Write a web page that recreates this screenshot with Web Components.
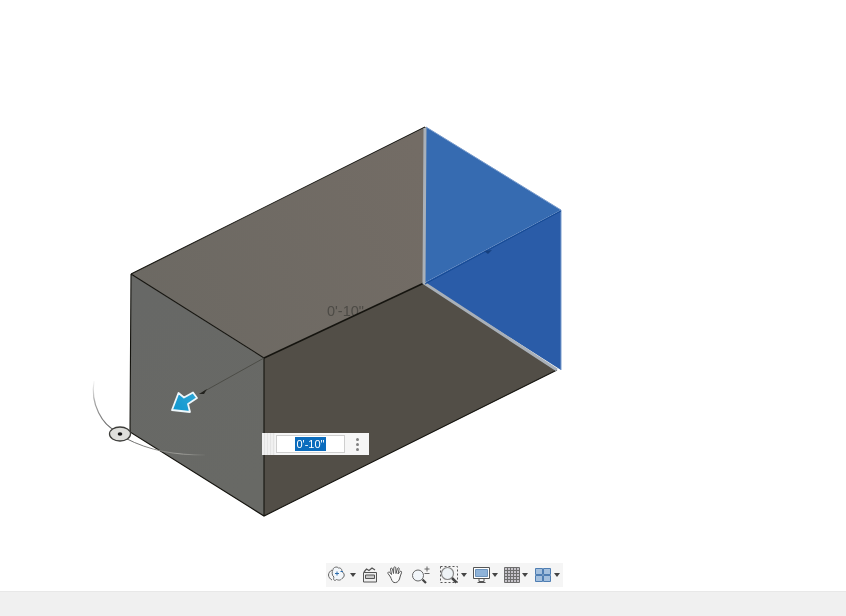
<!DOCTYPE html>
<html>
<head>
<meta charset="utf-8">
<style>
  html, body { margin: 0; height: 100%; background: #fff; }
  body { font-family: "Liberation Sans", Arial, sans-serif; overflow: hidden; }
</style>
</head>
<body>
<cad-app></cad-app>
<script>
class CadModel extends HTMLElement {
    constructor() {
        super()
        this.shadow = this.attachShadow({mode: 'open'})
    }
    connectedCallback() {
        this.shadow.innerHTML = `
        <style>
          :host { display: block; position: absolute; inset: 0; }
          svg { display: block; width: 100%; height: 100%; filter: blur(.35px); }
          text { font-family: "Liberation Sans", Arial, sans-serif; }
        </style>
        <svg viewBox="0 0 846 591" xmlns="http://www.w3.org/2000/svg">
          <defs>
            <linearGradient id="top" x1="131" y1="300" x2="425" y2="160" gradientUnits="userSpaceOnUse">
              <stop offset="0" stop-color="#6c6963"/><stop offset="1" stop-color="#736c65"/>
            </linearGradient>
            <linearGradient id="left" x1="131" y1="300" x2="264" y2="480" gradientUnits="userSpaceOnUse">
              <stop offset="0" stop-color="#676866"/><stop offset="1" stop-color="#686965"/>
            </linearGradient>
            <linearGradient id="arc" x1="93" y1="380" x2="125" y2="435" gradientUnits="userSpaceOnUse">
              <stop offset="0" stop-color="#fff"/><stop offset=".3" stop-color="#aaa"/><stop offset="1" stop-color="#444"/>
            </linearGradient>
            <linearGradient id="tail" x1="126" y1="440" x2="205" y2="455" gradientUnits="userSpaceOnUse">
              <stop offset="0" stop-color="#555"/><stop offset=".45" stop-color="#8a8a86"/><stop offset=".7" stop-color="#a5a5a0"/><stop offset="1" stop-color="#6e6f6b"/>
            </linearGradient>
            <linearGradient id="arrow" x1="172" y1="412" x2="196" y2="392" gradientUnits="userSpaceOnUse">
              <stop offset="0" stop-color="#0d95cf"/><stop offset="1" stop-color="#2fa7d6"/>
            </linearGradient>
          </defs>

          <!-- box faces -->
          <polygon points="131,274 426,127 424,283 264,358" fill="url(#top)"/>
          <text x="327" y="315.500" font-size="14.500" fill="#4d4b46">0'-10"</text>
          <polygon points="131,274 264,358 264,516 130,432" fill="url(#left)"/>
          <polygon points="264,358 424,283 557,370 264,516" fill="#524e47"/>

          <!-- box edges -->
          <path d="M131 274L425 127M131 274L264 358M131 274L130 432L264 516L557 370M264 358V516" fill="none" stroke="#15140f" stroke-width="1.100"/>
          <path d="M264 358L424 283" fill="none" stroke="#15140f" stroke-width="1.500"/>

          <!-- sketch arc around the pivot -->
          <path d="M94 381C90 405 103 425 116 431" fill="none" stroke="url(#arc)" stroke-width="1.200"/>
          <path d="M125 438C150 451 175 455 205 455" fill="none" stroke="url(#tail)" stroke-width=".9"/>

          <!-- selected face -->
          <polygon points="426,127 561,210 424,283" fill="#366bb1"/>
          <polygon points="561,210 561,370 424,283" fill="#2a5ca8"/>
          <path d="M425 128L424 283L557 370" fill="none" stroke="#a9b0b8" stroke-width="3"/>
          <path d="M426 127L561 210V370" fill="none" stroke="#7b9dcd" stroke-width="1"/>
          <path d="M425 284L561 211" fill="none" stroke="#154a94" stroke-width="1"/>
          <path d="M484 251L492 250L488 254Z" fill="#16407f"/>

          <!-- dimension leader -->
          <path d="M264 358L203 392" fill="none" stroke="#45453f" stroke-width=".8"/>
          <path d="M207 389L199 394L204 394Z" fill="#22221e"/>

          <!-- blue drag arrow -->
          <path d="M172 410L178.500 393L184 397.500L193 392.500L197 398L188 404L190 412Z" fill="url(#arrow)" stroke="#eef7fb" stroke-width="1.800" stroke-linejoin="round"/>

          <!-- pivot -->
          <ellipse cx="120" cy="434" rx="10.500" ry="7" fill="#dededb" stroke="#3d3d3a" stroke-width="1.300"/>
          <ellipse cx="120" cy="434" rx="2.300" ry="1.800" fill="#111"/>
        </svg>
        `
    }
}

class DimInput extends HTMLElement {
    constructor() {
        super()
        this.shadow = this.attachShadow({mode: 'open'})
    }
    connectedCallback() {
        this.shadow.innerHTML = `
        <style>
          :host {
            position: absolute; left: 262px; top: 433px;
            width: 107px; height: 22px; box-sizing: border-box;
            display: flex; align-items: center;
            background: #f6f6f6;
          }
          .grip { width: 13px; height: 100%; background: repeating-linear-gradient(90deg, #f0f0f0 0 2px, #e4e4e4 2px 3px); }
          .field {
            width: 69px; height: 18px; margin-left: 1px; box-sizing: border-box;
            border: 1px solid #cfcfcf; background: #fff;
            display: flex; justify-content: center; align-items: center;
          }
          .sel { background: #0b6cbd; color: #fff; font-size: 11px; line-height: 14px; padding: 0 1px; filter: blur(.25px); }
          .more { flex: 1; display: flex; flex-direction: column; align-items: center; gap: 2px; }
          .more i { width: 3px; height: 3px; border-radius: 50%; background: #808080; }
        </style>
        <div class="grip"></div>
        <div class="field"><span class="sel"><slot></slot></span></div>
        <div class="more"><i></i><i></i><i></i></div>
        `
    }
}

class NavBar extends HTMLElement {
    constructor() {
        super()
        this.shadow = this.attachShadow({mode: 'open'})
    }
    connectedCallback() {
        const caret = `<svg class="caret" width="6" height="4" viewBox="0 0 6 4"><path d="M0 0H6L3 4Z" fill="#444"/></svg>`
        const caretTight = `<svg class="caret tight" width="6" height="4" viewBox="0 0 6 4"><path d="M0 0H6L3 4Z" fill="#444"/></svg>`
        this.shadow.innerHTML = `
        <style>
          :host {
            position: absolute; left: 326px; top: 563px;
            width: 237px; height: 24px; box-sizing: border-box;
            display: flex; align-items: center;
            padding-left: 1px;
            background: #f5f5f5;
          }
          svg { display: block; flex: none; filter: blur(.3px); }
          .caret { margin-left: 3px; }
          .caret.tight { margin-left: 2px; }
        </style>
        <!-- orbit -->
        <svg width="20" height="20" viewBox="0 0 20 20" fill="none" stroke="#666" stroke-width="1">
          <path d="M5 5C3 6 1.500 8 1.500 10S3 14 5 15"/>
          <path d="M6 4.500C6 2.500 10 1 11.500 3C14 2.500 15.500 5 14.500 6.500C18 8 18 12 15 13.500C13 16 11 15 9.500 14.500C7 17 6 14 7 12C5 11 4.500 7 6 4.500Z" fill="#f3f7fb"/>
          <path d="M8 8.500H12M10 6.500V10.500M13.500 6.500H16" stroke="#2f6fae"/>
        </svg>
        ${caret}
        <!-- rewind -->
        <svg style="margin-left:6px" width="16" height="16" viewBox="0 0 16 16" fill="none" stroke="#555" stroke-width="1">
          <path d="M1.500 5.500H14.500V15H1.500Z" fill="#efefef"/>
          <path d="M3.500 8H12.500V11.500H3.500Z" fill="#c9c9c9"/>
          <path d="M2 5L4.500 2L7 3.500L10 1L13 3" stroke-width="1.300"/>
        </svg>
        <!-- pan -->
        <svg style="margin-left:9px" width="16" height="18" viewBox="0 0 16 18" fill="#fbfbfb" stroke="#555" stroke-width="1" stroke-linejoin="round">
          <path d="M3.500 11L1 7.500C.5 6 2 5.500 3 6.500L4.500 8.500L3.500 3C3.500 1.800 5 1.800 5.500 3L6.500 7.500L6.800 1.800C7 .5 8.500 .5 8.800 1.800L9 7.500L10.500 2.500C11 1.300 12.500 1.800 12.200 3L11 8L13 5.500C14 4.800 15 5.500 14.500 6.800C13.500 9 13 11 12.500 13C11.500 16 9 17 7 16.500C5 16 4.500 13 3.500 11Z"/>
        </svg>
        <!-- zoom +/- -->
        <svg style="margin-left:9px" width="19" height="18" viewBox="0 0 19 18" fill="none" stroke="#666">
          <circle cx="6" cy="9.500" r="5.500" fill="#f2f6fa"/>
          <path d="M10.500 13.500L14 17" stroke="#444" stroke-width="2.200"/>
          <path d="M12.500 3H17.500M15 .5V5.500M12.500 7.500H17.500" stroke-width="1"/>
        </svg>
        <!-- zoom window -->
        <svg style="margin-left:9px" width="18" height="18" viewBox="0 0 18 18" fill="none">
          <path d="M.5 .5H17.500V16.500H.5Z" stroke="#555" stroke-dasharray="2 2"/>
          <circle cx="7.500" cy="7.500" r="6" fill="#eef3f6" stroke="#888" stroke-width="1.200"/>
          <path d="M12 12L16.500 16.500" stroke="#444" stroke-width="2.500"/>
        </svg>
        ${caret}
        <!-- monitor -->
        <svg style="margin-left:6px" width="17" height="17" viewBox="0 0 17 17" fill="none" stroke="#555">
          <path d="M.5 .5H16.500V11.500H.5Z" fill="#fff"/>
          <path d="M2.500 2.500H14.500V9.500H2.500Z" fill="#8fb3d9" stroke="#6d93bb"/>
          <path d="M6 12V14.500H11V12M4.500 15.500H12.500"/>
        </svg>
        ${caretTight}
        <!-- grid -->
        <svg style="margin-left:6px" width="16" height="16" viewBox="0 0 16 16" fill="#c6c3c9" stroke="#6e6e6e">
          <path d="M.5 .5H15.500V15.500H.5Z"/>
          <path d="M3.500 .5V15.500M6.500 .5V15.500M9.500 .5V15.500M12.500 .5V15.500M.5 3.500H15.500M.5 6.500H15.500M.5 9.500H15.500M.5 12.500H15.500" fill="none"/>
        </svg>
        ${caretTight}
        <!-- viewports -->
        <svg style="margin-left:7px" width="16" height="14" viewBox="0 0 16 14" fill="#a4c0de" stroke="#4f7eb3">
          <path d="M.5 .5H7.500V6.500H.5ZM8.500 .5H15.500V6.500H8.500ZM.5 7.500H7.500V13.500H.5ZM8.500 7.500H15.500V13.500H8.500Z"/>
        </svg>
        ${caret}
        `
    }
}

class CadApp extends HTMLElement {
    constructor() {
        super()
        this.shadow = this.attachShadow({mode: 'open'})
    }
    connectedCallback() {
        this.shadow.innerHTML = `
        <style>
          :host { display: flex; flex-direction: column; height: 100vh; }
          .view { flex: 1; position: relative; background: #fff; }
          .status { height: 25px; background: #f0f0f0; border-top: 1px solid #e8e8e8; box-sizing: border-box; }
        </style>
        <div class="view">
          <cad-model></cad-model>
          <dim-input>0'-10"</dim-input>
          <nav-bar></nav-bar>
        </div>
        <div class="status"></div>
        `
    }
}

customElements.define('cad-model', CadModel)
customElements.define('dim-input', DimInput)
customElements.define('nav-bar', NavBar)
customElements.define('cad-app', CadApp)
</script>
</body>
</html>
